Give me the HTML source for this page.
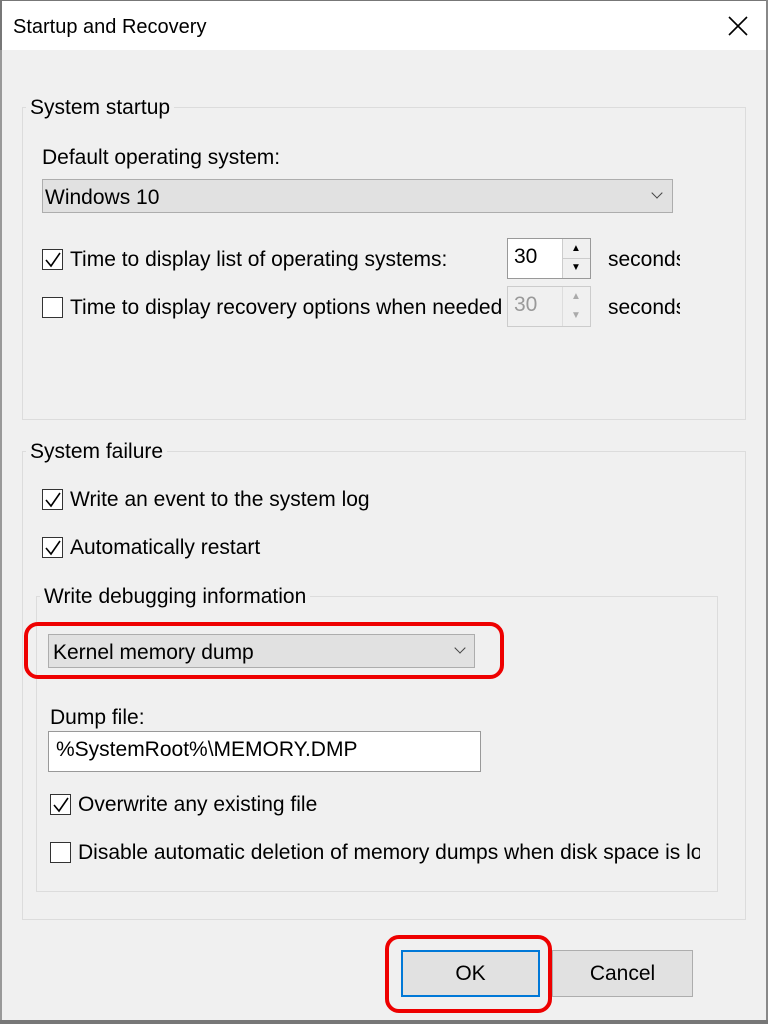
<!DOCTYPE html><html><head><style>
body{margin:0;width:768px;height:1024px;background:#f0f0f0;font-family:"Liberation Sans",sans-serif;font-size:21px;color:#000;position:relative;overflow:hidden}
div,span{position:absolute;box-sizing:border-box}
.t{white-space:nowrap;line-height:24px}
.grp{border:1px solid #dcdcdc}
.lab{background:#f0f0f0;padding:0 4px}
.cb{width:21px;height:21px;border:1px solid #333;background:#fff}
.dd{background:#e1e1e1;border:1px solid #adadad}
.chev{width:8px;height:8px;border-right:1px solid #444;border-bottom:1px solid #444;transform:rotate(45deg)}
.red{border:4px solid #e00;border-radius:14px}
.ar{font-size:10px;line-height:12px}
</style></head><body>
<div style="left:0;top:0;width:768px;height:50px;background:#fff;border-left:2px solid #777;border-top:1px solid #777"></div>
<div style="left:0;top:50px;width:2px;height:974px;background:#999"></div>
<div style="left:766px;top:0;width:2px;height:1024px;background:#888"></div>
<div class="t" style="left:13px;top:15px;font-size:20px">Startup and Recovery</div>
<svg style="position:absolute;left:728px;top:16px" width="20" height="20"><path d="M1 1L19 19M19 1L1 19" stroke="#000" stroke-width="1.6"/></svg>

<div class="grp" style="left:22px;top:107px;width:724px;height:313px"></div>
<div class="t lab" style="left:26px;top:96px">System startup</div>
<div class="t" style="left:42px;top:146px">Default operating system:</div>
<div class="dd" style="left:42px;top:179px;width:631px;height:34px"></div>
<div class="t" style="left:45px;top:186px">Windows 10</div>
<div class="chev" style="left:653px;top:189px"></div>
<div class="cb" style="left:42px;top:249px"></div>
<svg style="position:absolute;left:44px;top:251px" width="18" height="18"><path d="M2 9L7 15L16 2" stroke="#000" stroke-width="1.6" fill="none"/></svg>
<div class="t" style="left:70px;top:248px">Time to display list of operating systems:</div>
<div style="left:507px;top:238px;width:84px;height:41px;border:1px solid #999;background:#fff"></div>
<div style="left:562px;top:239px;width:28px;height:39px;background:#f0f0f0;border-left:1px solid #ccc"></div>
<div style="left:562px;top:258px;width:28px;height:1px;background:#ccc"></div>
<div class="t" style="left:514px;top:245px">30</div>
<div class="t ar" style="left:571px;top:243px">▲</div><div class="t ar" style="left:571px;top:262px">▼</div>
<div class="t" style="left:608px;top:248px;width:72px;overflow:hidden">seconds</div>
<div class="cb" style="left:42px;top:297px"></div>
<div class="t" style="left:70px;top:296px;width:433px;overflow:hidden">Time to display recovery options when needed:</div>
<div style="left:507px;top:286px;width:84px;height:41px;border:1px solid #ccc;background:#f0f0f0"></div>
<div style="left:562px;top:287px;width:1px;height:39px;background:#ddd"></div>
<div class="t" style="left:514px;top:293px;color:#999">30</div>
<div class="t ar" style="left:571px;top:291px;color:#aaa">▲</div><div class="t ar" style="left:571px;top:310px;color:#aaa">▼</div>
<div class="t" style="left:608px;top:296px;width:72px;overflow:hidden">seconds</div>

<div class="grp" style="left:22px;top:451px;width:724px;height:469px"></div>
<div class="t lab" style="left:26px;top:440px">System failure</div>
<div class="cb" style="left:42px;top:489px"></div>
<svg style="position:absolute;left:44px;top:491px" width="18" height="18"><path d="M2 9L7 15L16 2" stroke="#000" stroke-width="1.6" fill="none"/></svg>
<div class="t" style="left:70px;top:488px">Write an event to the system log</div>
<div class="cb" style="left:42px;top:537px"></div>
<svg style="position:absolute;left:44px;top:539px" width="18" height="18"><path d="M2 9L7 15L16 2" stroke="#000" stroke-width="1.6" fill="none"/></svg>
<div class="t" style="left:70px;top:536px">Automatically restart</div>

<div class="grp" style="left:36px;top:596px;width:682px;height:296px"></div>
<div class="t lab" style="left:40px;top:585px">Write debugging information</div>
<div class="dd" style="left:48px;top:634px;width:427px;height:34px"></div>
<div class="t" style="left:53px;top:641px">Kernel memory dump</div>
<div class="chev" style="left:456px;top:644px"></div>
<div class="red" style="left:24px;top:622px;width:480px;height:57px"></div>
<div class="t" style="left:50px;top:706px">Dump file:</div>
<div style="left:48px;top:731px;width:433px;height:41px;border:1px solid #999;background:#fff"></div>
<div class="t" style="left:56px;top:738px">%SystemRoot%\MEMORY.DMP</div>
<div class="cb" style="left:50px;top:794px"></div>
<svg style="position:absolute;left:52px;top:796px" width="18" height="18"><path d="M2 9L7 15L16 2" stroke="#000" stroke-width="1.6" fill="none"/></svg>
<div class="t" style="left:78px;top:793px">Overwrite any existing file</div>
<div class="cb" style="left:50px;top:842px"></div>
<div class="t" style="left:78px;top:841px;width:622px;overflow:hidden">Disable automatic deletion of memory dumps when disk space is low</div>

<div style="left:401px;top:950px;width:139px;height:47px;background:#e1e1e1;border:2px solid #0078d7"></div>
<div class="t" style="left:401px;top:962px;width:139px;text-align:center">OK</div>
<div style="left:552px;top:950px;width:141px;height:47px;background:#e1e1e1;border:1px solid #adadad"></div>
<div class="t" style="left:552px;top:962px;width:141px;text-align:center">Cancel</div>
<div class="red" style="left:385px;top:935px;width:167px;height:78px"></div>
<div style="left:0;top:1020px;width:768px;height:4px;background:#777"></div>
</body></html>
